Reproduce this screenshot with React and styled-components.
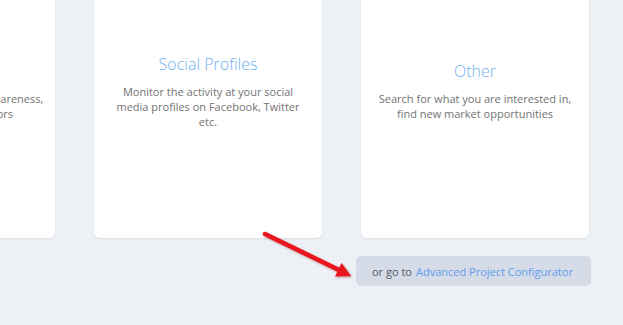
import React from "react";
import styled, { createGlobalStyle } from "styled-components";

const Global = createGlobalStyle`
  html, body { margin: 0; padding: 0; background: #edf0f5; overflow: hidden; }
  body { font-family: "Open Sans", "Liberation Sans", sans-serif; }
`;

const Page = styled.div`
  position: relative;
  width: 623px;
  height: 325px;
  overflow: hidden;
  background: #edf0f5;
`;

const CardRow = styled.div`
  display: flex;
  gap: 39px;
  margin-left: -173px;
  margin-top: -57px;
`;

const Card = styled.div`
  flex: 0 0 228px;
  width: 228px;
  min-width: 0;
  height: 295px;
  box-sizing: border-box;
  background: #ffffff;
  border-radius: 6px;
  box-shadow: 0 1px 2px rgba(40, 60, 90, 0.1);
  display: flex;
  flex-direction: column;
  align-items: center;
  justify-content: center;
  text-align: center;
  padding: 0 8px;
`;

const Title = styled.div`
  font-size: 16px;
  font-weight: 300;
  line-height: 22px;
  color: #6fb1ef;
  margin-bottom: 9px;
`;

const Desc = styled.div`
  font-size: 11px;
  line-height: 15px;
  color: #737373;
  white-space: nowrap;
`;

const Footer = styled.div`
  display: flex;
  justify-content: flex-end;
  padding-right: 32px;
  margin-top: 18px;
`;

const ConfigButton = styled.div`
  display: flex;
  align-items: center;
  gap: 4px;
  height: 30px;
  padding: 0 16px 0 16px;
  width: 235px;
  box-sizing: border-box;
  border-radius: 5px;
  background: #d6dce7;
  font-size: 11px;
  color: #555a63;
`;

const Link = styled.a`
  color: #5e9bf0;
  text-decoration: none;
`;

const Annotation = styled.svg`
  position: absolute;
  left: 0;
  top: 0;
  pointer-events: none;
`;

const cards = [
  {
    title: "Brand",
    lines: ["Track mentions, build brand awareness,", "and watch your competitors"],
  },
  {
    title: "Social Profiles",
    lines: ["Monitor the activity at your social", "media profiles on Facebook, Twitter", "etc."],
  },
  {
    title: "Other",
    lines: ["Search for what you are interested in,", "find new market opportunities"],
  },
];

export default function App() {
  return (
    <Page>
      <Global />
      <CardRow>
        {cards.map((c) => (
          <Card key={c.title}>
            <Title>{c.title}</Title>
            <Desc>
              {c.lines.map((l, i) => (
                <div key={i}>{l}</div>
              ))}
            </Desc>
          </Card>
        ))}
      </CardRow>
      <Footer>
        <ConfigButton>
          <span>or go to</span>
          <Link href="#">Advanced Project Configurator</Link>
        </ConfigButton>
      </Footer>
      <Annotation width="623" height="325" viewBox="0 0 623 325">
        <defs>
          <filter id="sh" x="-20%" y="-20%" width="140%" height="140%">
            <feDropShadow dx="1" dy="1" stdDeviation="0.8" floodColor="#7a0000" floodOpacity="0.45" />
          </filter>
        </defs>
        <g filter="url(#sh)">
          <line x1="265" y1="234" x2="339" y2="270" stroke="#e8141b" strokeWidth="4.5" strokeLinecap="round" />
          <polygon points="351,276 335,276.5 341.5,263" fill="#e8141b" />
        </g>
      </Annotation>
    </Page>
  );
}
